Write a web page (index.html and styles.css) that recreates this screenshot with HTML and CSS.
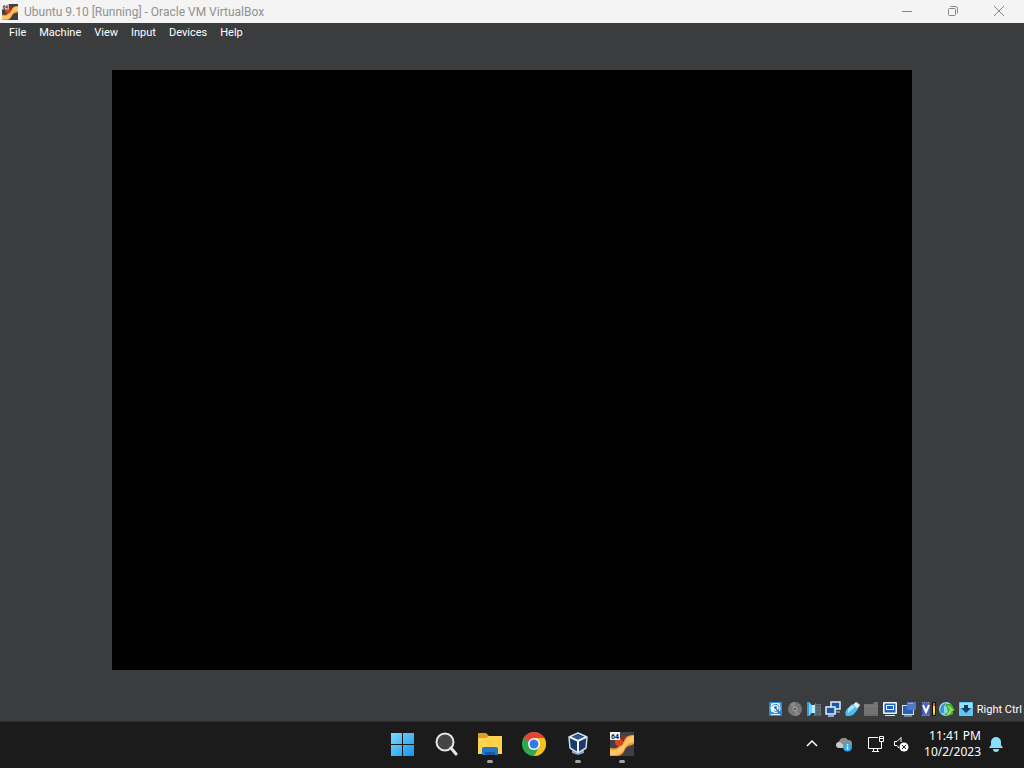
FILE: index.html
```html
<!DOCTYPE html>
<html lang="en">
<head>
  <meta charset="utf-8">
  <title>Ubuntu 9.10 [Running] - Oracle VM VirtualBox</title>
  <link rel="stylesheet" href="styles.css">
</head>
<body>
  <!-- shared guest OS icon -->
  <svg class="defs" aria-hidden="true">
    <symbol id="guest-icon" viewBox="0 0 24 24" overflow="visible">
      <rect width="24" height="24" fill="#403f48"/>
      <path d="M24 3v9c-3 2-5 1-7 3-3 2-2 5-5 7-2 2-4 2-6 2H0v-8c3 0 6 1 8-1 3-3 4-3 6-6 1-4 4-6 10-6z" fill="#f59a32"/>
      <path d="M24 4v6c-4 1-6 1-8 4-2 2-2 5-5 7-3 2-7 2-11 2v-5c4 0 7 1 9-2 2-2 5-3 6-6 2-4 4-6 9-6z" fill="#ffc66c"/>
      <circle cx="9" cy="10" r="4" fill="#dc4420"/>
      <path d="M11 4l3-2 2 3-3 4-2-1z" fill="#8a321f"/>
      <rect width="10" height="8" fill="#f4f4f4"/>
      <text class="badge" x="1" y="7">64</text>
    </symbol>
  </svg>

  <header class="titlebar">
    <svg class="title-icon"><use href="#guest-icon"/></svg>
    <h1 class="title">Ubuntu 9.10 [Running] - Oracle VM VirtualBox</h1>
    <div class="window-buttons">
      <button aria-label="Minimize"><svg viewBox="0 0 12 12"><path d="M1 6.500h10"/></svg></button>
      <button aria-label="Restore"><svg viewBox="0 0 12 12"><rect x="1.500" y="3.500" width="7" height="7" rx="1"/><path d="M3.500 1.500h5a2 2 0 0 1 2 2v5"/></svg></button>
      <button aria-label="Close"><svg viewBox="0 0 12 12"><path d="M1 1l10 10M11 1L1 11"/></svg></button>
    </div>
  </header>

  <nav class="menubar">
    <button>File</button>
    <button>Machine</button>
    <button>View</button>
    <button>Input</button>
    <button>Devices</button>
    <button>Help</button>
  </nav>

  <main class="machine">
    <div class="screen"></div>
  </main>

  <footer class="statusbar">
    <button aria-label="Hard disks"><svg viewBox="0 0 16 16">
      <rect x="1" y="1" width="13" height="14" rx="1" fill="#2b8fdc"/>
      <path d="M3 2h9v9H3z" fill="#9adcff"/>
      <circle cx="7.500" cy="7" r="5" fill="#fff"/>
      <path d="M4 5.500c1-3 7-3 7 1s-3 5-5 3" fill="none" stroke="#3176c0"/>
      <circle cx="7.500" cy="6.500" r="1.500" fill="#2468b5"/>
      <path d="M8 8l4 4" stroke="#2468b5" stroke-width="1.500"/>
      <path d="M3 13.500h9" stroke="#dff4ff"/>
    </svg></button>
    <button aria-label="Optical drives"><svg viewBox="0 0 16 16">
      <circle cx="8" cy="8" r="7" fill="#777"/>
      <path d="M8 8L3 3a7 7 0 0 1 5-2zM8 8l5 5a7 7 0 0 1-5 2z" fill="#898989"/>
      <circle cx="8" cy="8" r="2.500" fill="#999"/><circle cx="8" cy="8" r="1" fill="#444"/>
    </svg></button>
    <button aria-label="Audio"><svg viewBox="0 0 16 16">
      <path d="M8 3h7v12H8z" fill="#65717a"/>
      <path d="M10 5h4M10 8h4M10 11h4M10 14h4" stroke="#424c54"/>
      <path d="M1 1h2l3 3v8l-3 3H1z" fill="#2f9ddd"/>
      <path d="M3 1l3 4v6l-3 4z" fill="#75d5ff"/>
      <path d="M6 4h3v8H6z" fill="#b9eeff"/>
      <path d="M9.500 2v12" stroke="#2686cb"/>
    </svg></button>
    <button aria-label="Network"><svg viewBox="0 0 16 16">
      <rect x="6" y="1" width="9" height="7" fill="#1f57a5" stroke="#e3efff" stroke-width="1.500"/>
      <path d="M10 9v2h5" fill="none" stroke="#aecbf0"/>
      <rect x="1" y="6" width="9" height="7" fill="#1f57a5" stroke="#e3efff" stroke-width="1.500"/>
      <path d="M3 15h6" stroke="#aecbf0" stroke-width="1.500"/>
    </svg></button>
    <button aria-label="USB devices"><svg viewBox="0 0 16 16">
      <path d="M9 4l3-3 4 3-3 4z" fill="#e9eef2" stroke="#9eafbd"/>
      <path d="M3 8l5-5 6 5-4 5c-2 2-5 2-8 2-1-2-1-5 1-7z" fill="#4ebcf4"/>
      <path d="M4 8l4-4 3 2-7 6z" fill="#a9e7ff"/>
    </svg></button>
    <button aria-label="Shared folders"><svg viewBox="0 0 16 16">
      <path d="M1 3h9l1-2h4v14H1z" fill="#737373"/>
      <path d="M1 5h14" stroke="#818181"/><path d="M2 14h12" stroke="#606060"/>
    </svg></button>
    <button aria-label="Display"><svg viewBox="0 0 16 16">
      <rect x="1" y="1" width="14" height="12" rx="1" fill="#f0f7ff"/>
      <rect x="2.500" y="2.500" width="11" height="9" fill="#2262b2"/>
      <rect x="4.500" y="4.500" width="7" height="4" fill="#2262b2" stroke="#e5f1ff"/>
      <path d="M3 14.500h10" stroke="#d7e9fb"/>
    </svg></button>
    <button aria-label="Recording"><svg viewBox="0 0 16 16">
      <rect x="1.500" y="4.500" width="11" height="9" fill="#2461ae" stroke="#d7e6f7"/>
      <rect x="6" y="1" width="9" height="8" fill="#5574ce"/>
      <path d="M7 2.500h5" stroke="#91a9e6"/>
      <path d="M3 15h8" stroke="#b7cde6"/>
    </svg></button>
    <button aria-label="CPU"><svg viewBox="0 0 16 16">
      <rect x="2" y="1" width="8" height="14" fill="#4b5fb9"/>
      <path d="M2 1.500h8M2 14.500h8" stroke="#8793cf" stroke-dasharray="1 1"/>
      <path d="M3 4l3 7 3-7" fill="none" stroke="#fff" stroke-width="2"/>
      <rect x="12" y="1" width="4" height="14" fill="#111"/>
      <path d="M14 2v3" stroke="#eb5624" stroke-width="2"/>
      <path d="M14 5v7" stroke="#ffe02b" stroke-width="2"/>
      <path d="M14 12v2" stroke="#b6cc3f" stroke-width="2"/>
    </svg></button>
    <button aria-label="Mouse integration"><svg viewBox="0 0 16 16">
      <circle cx="7" cy="8" r="7" fill="#8ed4ee"/>
      <path d="M2 12c-2-5 1-9 5-10-3 4-2 6-2 10z" fill="#3b91c5"/>
      <path d="M6 3h6l4 6-2 1v3l-5 2-4-2 4-2-1-4z" fill="#3eac34"/>
      <path d="M9 5l4 4-2 1v2l-3 1" fill="none" stroke="#8fe060" stroke-width="2"/>
    </svg></button>
    <button aria-label="Keyboard capture"><svg viewBox="0 0 16 16">
      <rect x="1" y="1" width="14" height="14" rx="1" fill="#62c5f5"/>
      <path d="M2 2h12v5H2z" fill="#94e0ff"/>
      <path d="M6 4h4v3h3l-5 5-5-5h3z" fill="#113e65"/>
    </svg></button>
    <span class="host-key">Right Ctrl</span>
  </footer>

  <div class="taskbar">
    <div class="apps">
      <button aria-label="Start"><svg viewBox="0 0 24 24">
        <linearGradient id="win" x2="1" y2="1"><stop stop-color="#7bdcff"/><stop offset="1" stop-color="#1593ec"/></linearGradient>
        <path d="M1 1h11v11H1zM13 1h11v11H13zM1 13h11v11H1zM13 13h11v11H13z" fill="url(#win)"/>
      </svg></button>
      <button aria-label="Search"><svg viewBox="0 0 24 24">
        <circle cx="11" cy="10" r="8.500" fill="#454545" stroke="#e5e5e5" stroke-width="2"/>
        <path d="M17 16l5 6" stroke="#e5e5e5" stroke-width="3" stroke-linecap="round"/>
      </svg></button>
      <button class="open" aria-label="File Explorer"><svg viewBox="0 0 24 24">
        <path d="M0 2q0-1 1-1h7l3 3h12q1 0 1 1v8H0z" fill="#dda022"/>
        <path d="M0 6h8l3-2h13v18H0z" fill="#ffd24e"/>
        <path d="M4 23v-6q0-2 2-2h12q2 0 2 2v6z" fill="#2476c8"/>
        <path d="M7 23v-3h10v3z" fill="#175aa5"/>
      </svg></button>
      <button aria-label="Google Chrome"><svg viewBox="0 0 24 24">
        <circle cx="12" cy="12" r="12" fill="#2fa84f"/>
        <path d="M12 12L1.600 6A12 12 0 0 1 22.400 6z" fill="#e94235"/>
        <path d="M22.400 6A12 12 0 0 1 12 24l5.200-9L12 6z" fill="#fbc016"/>
        <path d="M1.600 6l5.200 9L12 6z" fill="#e94235"/>
        <path d="M1.600 6l5.200 9L12 12z" fill="#2fa84f"/>
        <circle cx="12" cy="12" r="6" fill="#fff"/><circle cx="12" cy="12" r="4.500" fill="#3478e5"/>
      </svg></button>
      <button class="open" aria-label="Oracle VM VirtualBox"><svg viewBox="0 0 24 24">
        <path d="M6 18l6 4 6-4v3l-6 2-6-2z" fill="#8ba5c3"/>
        <path d="M12 1l9 4-1 11-8 5-8-5L3 5z" fill="#183b69" stroke="#cfdeed" stroke-width="1.500" stroke-linejoin="round"/>
        <path d="M4 5l8 4 8-4M12 9v11" fill="none" stroke="#f0f6fb" stroke-width="2"/>
        <path d="M6 5l6-2 6 2-6 2z" fill="#315b8e"/>
      </svg></button>
      <button class="open" aria-label="Ubuntu 9.10"><svg><use href="#guest-icon"/></svg></button>
    </div>

    <div class="tray">
      <button aria-label="Show hidden icons"><svg viewBox="0 0 16 16"><path d="M3 10l5-5 5 5" fill="none" stroke="#fff" stroke-width="1.500"/></svg></button>
      <button class="cloud" aria-label="OneDrive"><svg viewBox="0 0 16 16">
        <path d="M3 11a3 3 0 0 1 0-5 5 5 0 0 1 9-2 3 3 0 0 1 1 7z" fill="#8d8d8d"/>
        <path d="M0 9a3 3 0 0 1 4-3l7 6H3a3 3 0 0 1-3-3z" fill="#c9c9c9"/>
        <circle cx="11.500" cy="11" r="4.500" fill="#38a9e4"/>
        <path d="M11.500 8v1.500M11.500 10.500v3" stroke="#fff" stroke-width="1.500"/>
      </svg></button>
      <button class="network" aria-label="Network"><svg viewBox="0 0 16 16">
        <path d="M10 1.500H.500v11h13V8M4 15.500h7M5.500 13v2M9.500 13v2M13.500 6v3" fill="none" stroke="#fff"/>
        <path d="M11.500.500h4v5h-4zM11.500 2.500h4" fill="none" stroke="#fff"/>
      </svg></button>
      <button aria-label="Volume muted"><svg viewBox="0 0 16 16">
        <path d="M6 12L4 9.500H1.500v-4H4l4-4V6" fill="none" stroke="#fff"/>
        <circle cx="11" cy="11" r="4.500" fill="#fff"/>
        <path d="M9 9l4 4M13 9l-4 4" stroke="#1c1c1c"/>
      </svg></button>
      <time class="clock" datetime="2023-10-02T23:41"><span>11:41 PM</span><span>10/2/2023</span></time>
      <button aria-label="Notifications"><svg viewBox="0 0 16 16">
        <path d="M1 12l2-3V6a5 5 0 0 1 10 0v3l2 3z" fill="#87dffc"/>
        <path d="M5 13h6a3 3 0 0 1-6 0z" fill="#87dffc"/>
      </svg></button>
    </div>
  </div>
</body>
</html>
```
FILE: styles.css
```css
* {
  box-sizing: border-box;
}

body {
  margin: 0;
  min-height: 100vh;
  display: flex;
  flex-direction: column;
  font-family: Roboto, "Noto Sans", sans-serif;
  font-size: 11px;
  color: #fff;
  background: #3b3c3d;
}

button {
  margin: 0;
  padding: 0;
  border: none;
  background: none;
  font: inherit;
  color: inherit;
}

svg {
  display: block;
}

.defs {
  position: absolute;
  width: 0;
  height: 0;
}

.badge {
  font-size: 7px;
  font-weight: bold;
  fill: #222;
}

/* title bar */
.titlebar {
  height: 23px;
  display: flex;
  align-items: center;
  padding-left: 2px;
  background: #f4f4f4;
  color: #909090;
}

.title-icon {
  width: 16px;
  height: 16px;
  overflow: visible;
}

.title {
  margin: 0 auto 0 6px;
  font-size: 12px;
  font-weight: normal;
}

.window-buttons {
  display: flex;
  align-self: stretch;
  padding-right: 2px;
}

.window-buttons button {
  width: 46px;
  padding-bottom: 2px;
}

.window-buttons svg {
  width: 12px;
  height: 12px;
  margin: 0 auto;
  fill: none;
  stroke: #858585;
}

/* menu */
.menubar {
  height: 19px;
  display: flex;
  align-items: center;
  gap: 13px;
  padding: 0 9px;
}

.machine {
  flex: 1;
  display: flex;
  padding: 28px 112px;
}

.screen {
  flex: 1;
  background: #000;
}

/* status bar */
.statusbar {
  height: 23px;
  display: flex;
  justify-content: flex-end;
  align-items: center;
  gap: 3px;
  padding: 0 2px 2px 0;
}

.statusbar svg {
  width: 16px;
  height: 16px;
}

.host-key {
  padding-top: 2px;
}

/* taskbar */
.taskbar {
  height: 47px;
  display: grid;
  grid-template-columns: 1fr auto 1fr;
  padding-bottom: 2px;
  border-top: 1px solid #292929;
  background: #1b1b1b;
}

.apps {
  grid-column: 2;
  display: flex;
}

.apps button {
  width: 44px;
  position: relative;
}

.apps svg {
  width: 24px;
  height: 24px;
  margin: 0 auto;
}

.open::after {
  content: "";
  position: absolute;
  left: 19px;
  bottom: 3px;
  width: 6px;
  height: 3px;
  border-radius: 2px;
  background: #a5a5a5;
}

.tray {
  display: flex;
  justify-content: flex-end;
  align-items: center;
  padding-right: 20px;
}

.tray svg {
  width: 16px;
  height: 16px;
}

.cloud {
  margin: 0 16px;
}

.network {
  margin-right: 9px;
}

.clock {
  display: flex;
  flex-direction: column;
  margin: 0 7px 0 15px;
  font-family: "Noto Sans", sans-serif;
  font-size: 12px;
  line-height: 16px;
  text-align: right;
}
```
